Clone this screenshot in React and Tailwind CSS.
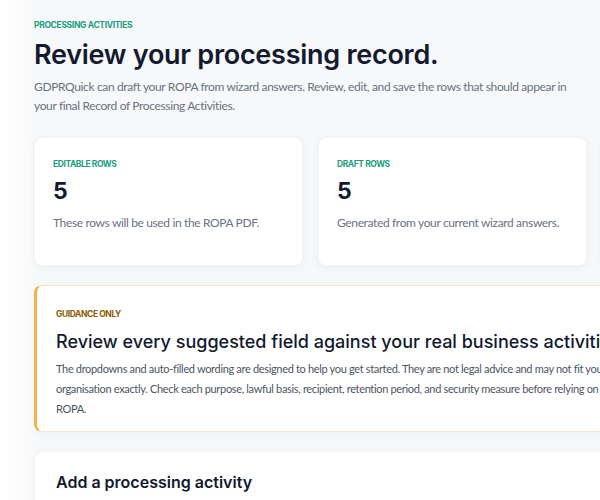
const heading = "font-['Inter','Noto_Sans',sans-serif]";
const body = "font-['Lato','Liberation_Sans',sans-serif]";

function StatCard({ label, value, text }) {
  return (
    <div className="h-[129px] rounded-lg border border-gray-100 bg-white px-[18px] pt-[21px] shadow-[0_2px_8px_rgba(15,23,42,0.05)]">
      <p className={`${heading} text-[8.5px] font-bold uppercase leading-[10px] tracking-[-0.05em] text-[#1a9e80]`}>
        {label}
      </p>
      <p className={`${heading} mt-[11px] text-[23px] font-bold leading-[23px] text-[#111a2e]`}>{value}</p>
      <p className={`${body} mt-[10px] text-[12px] leading-[20px] tracking-[-0.03em] text-[#6b7280]`}>{text}</p>
    </div>
  );
}

export default function App() {
  return (
    <div className="h-[500px] w-[600px] overflow-hidden bg-[linear-gradient(90deg,#ffffff_0px,#f7f8f9_40px)]">
      <div className="w-[880px] pl-[34px] pt-[19px]">
        <p className={`${heading} text-[8.5px] font-bold uppercase leading-[12px] tracking-[-0.04em] text-[#1a9e80]`}>
          Processing activities
        </p>
        <h1 className={`${heading} mt-[6px] text-[27px] font-semibold leading-[36px] tracking-[-0.01em] text-[#111a2e]`}>
          Review your processing record.
        </h1>
        <p className={`${body} mt-[4px] max-w-[540px] text-[12px] leading-[19px] tracking-[-0.03em] text-[#6b7280]`}>
          GDPRQuick can draft your ROPA from wizard answers. Review, edit, and save the rows that should
          appear in your final Record of Processing Activities.
        </p>

        <div className="mt-[22px] grid w-[837px] grid-cols-3 gap-[15px]">
          <StatCard label="Editable rows" value="5" text="These rows will be used in the ROPA PDF." />
          <StatCard label="Draft rows" value="5" text="Generated from your current wizard answers." />
          <div className="h-[129px] rounded-lg border border-gray-100 bg-white shadow-[0_2px_8px_rgba(15,23,42,0.05)]" />
        </div>

        <div className="mt-[19px] rounded-lg border border-[#f3e7cc] border-l-[3px] border-l-[#eab54a] bg-white px-[19px] pb-[12px] pt-[23px] shadow-[0_2px_8px_rgba(15,23,42,0.04)]">
          <p className={`${heading} text-[8.5px] font-bold uppercase leading-[10px] tracking-[-0.05em] text-[#8a5d00]`}>
            Guidance only
          </p>
          <h2 className={`${heading} mt-[10px] text-[18px] font-medium leading-[26px] text-[#111a2e]`}>
            Review every suggested field against your real business activities.
          </h2>
          <p className={`${body} mt-[4px] max-w-[575px] text-[11px] leading-[20px] tracking-[-0.03em] text-[#4b5563]`}>
            The dropdowns and auto-filled wording are designed to help you get started. They are not legal advice
            and may not fit your organisation exactly. Check each purpose, lawful basis, recipient, retention
            period, and security measure before relying on your ROPA.
          </p>
        </div>

        <div className="mt-[19px] h-[80px] rounded-lg border border-gray-100 bg-white px-[21px] pt-[19px] shadow-[0_2px_8px_rgba(15,23,42,0.04)]">
          <h2 className={`${heading} text-[16px] font-semibold leading-[22px] text-[#111a2e]`}>
            Add a processing activity
          </h2>
        </div>
      </div>
    </div>
  );
}
